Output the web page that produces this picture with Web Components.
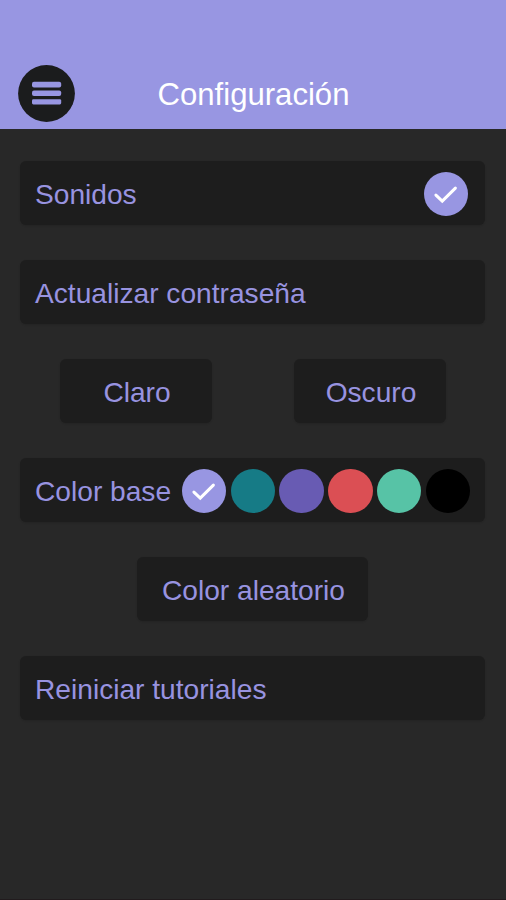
<!DOCTYPE html>
<html lang="es">
<head>
<meta charset="utf-8">
<title>Configuración</title>
<style>
html, body { margin: 0; height: 100%; background: #282828; }
body { font-family: "Liberation Sans", Arial, sans-serif; overflow: hidden; }
</style>
</head>
<body>
<settings-screen></settings-screen>
<script>
class BaseElement extends HTMLElement {
  constructor() {
    super();
    this.attachShadow({ mode: "open" }).innerHTML = this.constructor.markup;
  }
}

customElements.define("menu-button", class extends BaseElement {
  static markup = `
    <style>
      :host { display: block; width: 57px; height: 57px; }
      svg { display: block; }
    </style>
    <svg width="57" height="57" viewBox="0 0 57 57">
      <circle cx="28.5" cy="28.5" r="28.4" fill="#1b1c1d"/>
      <g fill="#9896e2">
        <rect x="14" y="16.8" width="29.2" height="5.6" rx="2"/>
        <rect x="14" y="25.5" width="29.2" height="5.6" rx="2"/>
        <rect x="14" y="34.2" width="29.2" height="5.2" rx="1.4"/>
      </g>
    </svg>`;
});

customElements.define("app-header", class extends BaseElement {
  static markup = `
    <style>
      :host {
        display: grid; grid-template-columns: 57px 1fr 57px; align-items: end;
        box-sizing: border-box; height: 128.5px; padding: 0 18px 7px;
        background: #9896e2; color: #fff;
      }
      h1 { margin: 0; padding-left: 1px; font-size: 31.1px; font-weight: 400; line-height: 55px; text-align: center; white-space: nowrap; }
    </style>
    <menu-button></menu-button>
    <h1><slot></slot></h1>`;
});

customElements.define("color-dot", class extends BaseElement {
  static markup = `
    <style>
      :host {
        display: block; flex: none; width: 44.4px; height: 44.4px;
        border-radius: 50%; background: var(--dot, #9896e2);
      }
      svg { display: none; width: 100%; height: 100%; }
      :host([checked]) svg { display: block; }
    </style>
    <svg viewBox="0 0 44 44">
      <path d="M11.8 22.9 L18.1 28.9 L31.1 16" fill="none" stroke="#fff" stroke-width="3" stroke-linecap="round" stroke-linejoin="miter"/>
    </svg>`;
});

customElements.define("setting-card", class extends BaseElement {
  static markup = `
    <style>
      :host {
        display: flex; align-items: center; justify-content: space-between;
        box-sizing: border-box; height: 63.5px; padding: 2.6px 15px 0;
        border-radius: 6px; background: #1d1d1d; color: #9893e0;
        box-shadow: 0 1px 2px rgba(0, 0, 0, .12);
        font-size: 28.15px; line-height: 32px; white-space: nowrap;
      }
      :host([centered]) { justify-content: center; padding: 2.6px 0 0 2px; }
      .label { padding-top: 2px; }
    </style>
    <div class="label"><slot></slot></div><slot name="end"></slot>`;
});

customElements.define("settings-screen", class extends BaseElement {
  static markup = `
    <style>
      :host { display: block; box-sizing: border-box; height: 900px; background: #282828; border-bottom: 1px solid #211b1d; }
      main { display: flex; flex-direction: column; gap: 35.5px; padding: 32.5px 21px 0 20px; }
      .themes { display: flex; justify-content: space-between; padding: 0 39px 0 40px; }
      .themes setting-card { width: 152px; }
      .random { align-self: center; width: 231px; }
      .end { display: flex; gap: 4.35px; }
      .sound { margin-right: 2px; }
    </style>
    <app-header>Configuración</app-header>
    <main>
      <setting-card>Sonidos<color-dot slot="end" class="sound" checked></color-dot></setting-card>
      <setting-card>Actualizar contraseña</setting-card>
      <div class="themes">
        <setting-card centered>Claro</setting-card>
        <setting-card centered>Oscuro</setting-card>
      </div>
      <setting-card>Color base
        <div slot="end" class="end">
          <color-dot checked></color-dot>
          <color-dot style="--dot:#167b86"></color-dot>
          <color-dot style="--dot:#685bb3"></color-dot>
          <color-dot style="--dot:#db4f54"></color-dot>
          <color-dot style="--dot:#57c3a6"></color-dot>
          <color-dot style="--dot:#000"></color-dot>
        </div>
      </setting-card>
      <setting-card centered class="random">Color aleatorio</setting-card>
      <setting-card>Reiniciar tutoriales</setting-card>
    </main>`;
});
</script>
</body>
</html>
